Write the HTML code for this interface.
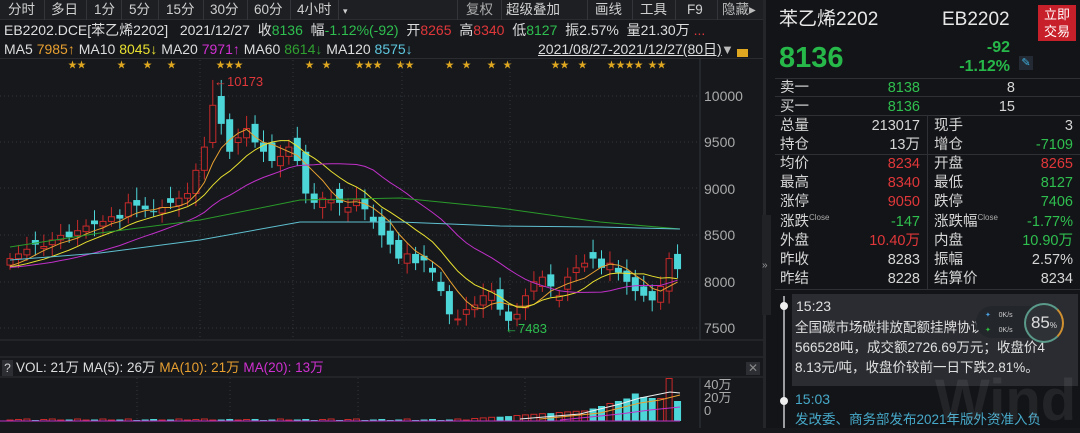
<!DOCTYPE html>
<html><head><meta charset="utf-8"><style>
*{margin:0;padding:0;box-sizing:border-box}
html,body{height:428px}
body{width:1080px;height:428px;background:#16181c;color:#d8d8d8;font-family:"Liberation Sans","Noto Sans CJK SC",sans-serif;position:relative;overflow:hidden;font-size:13px;line-height:1.2}
.a{position:absolute;white-space:nowrap}
.r{color:#e0373a}.g{color:#2fbf4f}.w{color:#e4e4e4}
.tb{position:absolute;left:0;top:0;width:763px;height:20px;background:#1d1f23;border-bottom:1px solid #2a2c30}
.tb span{position:absolute;top:2px;font-size:13.5px;line-height:16px;color:#d0d0d0}
.sep{position:absolute;top:0;width:1px;height:20px;background:#33353a}
.cl{font-size:8px;color:#aaa;position:relative;top:-6px}
</style></head><body>
<div class="tb">
<span style="left:8px">分时</span><div class="sep" style="left:44px"></div>
<span style="left:51px">多日</span><div class="sep" style="left:86px"></div>
<span style="left:94px">1分</span><div class="sep" style="left:121px"></div>
<span style="left:129px">5分</span><div class="sep" style="left:158px"></div>
<span style="left:166px">15分</span><div class="sep" style="left:203px"></div>
<span style="left:210px">30分</span><div class="sep" style="left:247px"></div>
<span style="left:254px">60分</span><div class="sep" style="left:290px"></div>
<span style="left:297px">4小时</span><div class="sep" style="left:338px"></div>
<span style="left:343px;font-size:9px;top:3px">▾</span>
<div class="sep" style="left:457px"></div>
<span style="left:466px;color:#aaa">复权</span><div class="sep" style="left:501px"></div>
<span style="left:506px">超级叠加</span><div class="sep" style="left:587px"></div>
<span style="left:595px">画线</span><div class="sep" style="left:632px"></div>
<span style="left:640px">工具</span><div class="sep" style="left:675px"></div>
<span style="left:687px">F9</span><div class="sep" style="left:717px"></div>
<span style="left:722px;color:#bbb">隐藏▸</span>
</div>
<div class="a" style="left:4px;top:22px;font-size:14px;line-height:17px;color:#ddd">EB2202.DCE[苯乙烯2202] &nbsp; 2021/12/27 &nbsp;收<span class="g">8136</span> &nbsp;幅<span class="g">-1.12%(-92)</span> &nbsp;开<span class="r">8265</span> &nbsp;高<span class="r">8340</span> &nbsp;低<span class="g">8127</span> &nbsp;振2.57% &nbsp;量21.30万 <span class="r">...</span></div>
<div class="a" style="left:4px;top:41px;font-size:14px;line-height:17px;color:#ddd">MA5 <span style="color:#e8a030">7985↑</span> MA10 <span style="color:#e8e030">8045↓</span> MA20 <span style="color:#d030d0">7971↑</span> MA60 <span style="color:#2fa02f">8614↓</span> MA120 <span style="color:#5fc8e0">8575↓</span></div>
<div class="a" style="left:538px;top:41px;font-size:14px;line-height:17px;color:#ddd;text-decoration:underline">2021/08/27-2021/12/27(80日)</div>
<div class="a" style="left:721px;top:41px;font-size:13px;line-height:17px;color:#bbb">▼</div>
<div class="a" style="left:737px;top:49px;width:11px;height:8px;background:#e0a820"></div>
<div class="a" style="left:0;top:58px;width:763px;height:1px;background:#2a2c30"></div>
<div class="a" style="left:0;top:58px;width:700px;font-size:9px;line-height:10px;color:#e0a820" id="stars"></div>
<svg class="a" style="left:0;top:0" width="765" height="428" id="ch"></svg>
<div class="a" style="left:214px;top:74px;font-size:13px;line-height:15px;color:#e0373a">←10173</div>
<div class="a" style="left:505px;top:321px;font-size:13px;line-height:15px;color:#2fbf4f">←7483</div>
<div class="a" style="left:704px;top:88px;font-size:14px;line-height:16px;color:#aaa">10000</div>
<div class="a" style="left:704px;top:134px;font-size:14px;line-height:16px;color:#aaa">9500</div>
<div class="a" style="left:704px;top:181px;font-size:14px;line-height:16px;color:#aaa">9000</div>
<div class="a" style="left:704px;top:227px;font-size:14px;line-height:16px;color:#aaa">8500</div>
<div class="a" style="left:704px;top:274px;font-size:14px;line-height:16px;color:#aaa">8000</div>
<div class="a" style="left:704px;top:320px;font-size:14px;line-height:16px;color:#aaa">7500</div>
<div class="a" style="left:2px;top:360px;width:11px;height:16px;background:#2c2e33;color:#ccc;font-size:12px;line-height:16px;text-align:center">?</div>
<div class="a" style="left:16px;top:360px;font-size:13.5px;line-height:16px;color:#ddd">VOL: 21万 MA(5): 26万 <span style="color:#e8a030">MA(10): 21万</span> <span style="color:#d030d0">MA(20): 13万</span></div>
<div class="a" style="left:746px;top:362px;width:14px;height:13px;background:#2c2e33;color:#888;font-size:12px;text-align:center;line-height:13px">✕</div>
<div class="a" style="left:704px;top:378px;font-size:13px;color:#aaa;line-height:13px">40万<br>20万<br>0</div>
<div class="a" style="left:763px;top:0;width:3px;height:428px;background:#24262a"></div>
<div class="a" style="left:766px;top:0;width:314px;height:428px;background:#131417"></div>
<div class="a" style="left:762px;top:215px;width:9px;height:100px;background:#202226;color:#999;font-size:10px;line-height:12px;padding-top:45px">»</div>
<div class="a" style="left:779px;top:9px;font-size:19px;line-height:22px;color:#e8e8e8">苯乙烯2202</div>
<div class="a" style="left:942px;top:9px;font-size:19px;line-height:22px;color:#e8e8e8">EB2202</div>
<div class="a" style="left:1038px;top:5px;width:38px;height:36px;background:#c8202a;color:#fff;font-size:13px;line-height:17px;text-align:center;padding-top:1px">立即<br>交易</div>
<div class="a" style="left:779px;top:42px;font-size:29px;line-height:32px;font-weight:bold;color:#27b84a">8136</div>
<div class="a" style="left:940px;top:38px;width:70px;text-align:right;font-size:16px;font-weight:bold;line-height:19px;color:#27b84a">-92<br>-1.12%</div>
<div class="a" style="left:1019px;top:56px;width:14px;height:14px;background:#232a33;color:#40b0e0;font-size:11px;text-align:center;line-height:14px">✎</div>
<div class="a" style="left:775px;top:78px;width:305px;height:1px;background:#2e3035"></div>
<div class="a" style="left:775px;top:96px;width:305px;height:1px;background:#2e3035"></div>
<div class="a" style="left:775px;top:115px;width:305px;height:1px;background:#2e3035"></div>
<div class="a" style="left:775px;top:154px;width:305px;height:1px;background:#2e3035"></div>
<div class="a" style="left:775px;top:289px;width:305px;height:1px;background:#2e3035"></div>
<div class="a" style="left:927px;top:116px;width:1px;height:173px;background:#2e3035"></div>
<div id="tbl"></div>
<div class="a" style="left:783px;top:296px;width:2px;height:132px;background:#9a9ca0"></div>
<div class="a" style="left:780px;top:302px;width:8px;height:8px;border-radius:50%;background:#eee"></div>
<div class="a" style="left:780px;top:397px;width:8px;height:8px;border-radius:50%;background:#eee"></div>
<div class="a" style="left:792px;top:294px;width:286px;height:92px;background:#2a2c31"></div>
<div class="a" style="left:796px;top:298px;font-size:14px;line-height:17px;color:#e0e0e0">15:23</div>
<div class="a" style="left:795px;top:318px;font-size:13.5px;color:#e0e0e0;line-height:20px;width:282px;overflow:hidden">全国碳市场碳排放配额挂牌协议交易成交量<br>566528吨，成交额2726.69万元；收盘价4<br>8.13元/吨，收盘价较前一日下跌2.81%。</div>
<div class="a" style="left:976px;top:306px;width:80px;height:32px;border-radius:16px;background:#23262b"></div>
<div class="a" style="left:985px;top:311px;font-size:7px;line-height:9px;color:#4aa0e0">✦ <span style="color:#ccc">&nbsp;&nbsp;&nbsp;0K/s</span></div>
<div class="a" style="left:985px;top:326px;font-size:7px;line-height:9px;color:#30c040">✦ <span style="color:#ccc">&nbsp;&nbsp;&nbsp;0K/s</span></div>
<div class="a" style="left:1024px;top:303px;width:40px;height:40px;border-radius:50%;background:#2e3237;border:2px solid #5a9a8a;border-right-color:#d09030;color:#ddd;font-size:17px;text-align:center;line-height:36px">85<span style="font-size:8px">%</span></div>
<div class="a" style="left:795px;top:391px;font-size:14px;line-height:17px;color:#46a8c8">15:03</div>
<div class="a" style="left:795px;top:411px;font-size:13.5px;line-height:17px;color:#46a8c8">发改委、商务部发布2021年版外资准入负</div>
<div class="a" style="left:935px;top:370px;font-size:58px;line-height:62px;font-weight:bold;color:rgba(255,255,255,0.07)">Wind</div>
<script>
const S=document.getElementById('ch');let h='';
const y=p=>96+(10000-p)*0.0929;
[96,142,188,235,282,328].forEach(v=>h+=`<line x1="0" x2="700" y1="${v}" y2="${v}" stroke="#33363b" stroke-dasharray="1,3"/>`);
[200,293,402,510].forEach(v=>h+=`<line x1="${v}" x2="${v}" y1="60" y2="340" stroke="#33363b" stroke-dasharray="1,3"/>`);
[137,230,358,525].forEach(v=>h+=`<line x1="${v}" x2="${v}" y1="378" y2="422" stroke="#33363b" stroke-dasharray="1,3"/>`);
h+=`<line x1="700" x2="700" y1="59" y2="340" stroke="#33363b"/><line x1="700" x2="700" y1="378" y2="428" stroke="#33363b"/>`;
h+=`<line x1="0" x2="763" y1="340" y2="340" stroke="#2e3035"/><line x1="0" x2="763" y1="357" y2="357" stroke="#2e3035"/><line x1="0" x2="763" y1="377" y2="377" stroke="#2e3035"/>`;
const C=[8250,8300,8350,8400,8380,8450,8500,8480,8550,8600,8620,8650,8700,8680,8850,8820,8780,8750,8800,8850,8900,8950,9200,9450,9900,9700,9400,9550,9650,9500,9400,9300,9350,9450,9300,8950,8850,8900,8880,8850,8800,8880,8780,8650,8500,8400,8250,8300,8200,8230,8100,7900,7650,7600,7700,7750,7850,7900,7700,7580,7650,7850,8000,8050,7950,7850,8050,8150,8200,8250,8150,8200,8100,8000,7900,7850,7800,7950,8250,8136];
const O=[8180,8250,8290,8450,8360,8400,8450,8540,8500,8540,8660,8600,8650,8720,8700,8880,8820,8760,8740,8900,8820,8900,8950,9200,9500,10000,9750,9500,9550,9700,9500,9500,9250,9350,9550,9400,8950,8800,8850,9000,8750,8820,8900,8700,8700,8550,8450,8200,8300,8280,8150,8000,7900,7600,7650,7700,7750,7800,7920,7680,7600,7720,7900,7950,8080,7800,7920,8100,8160,8320,8250,8130,8150,8120,8050,7950,7900,7780,7900,8300];
const X=i=>10+i*8.45;
for(let i=0;i<80;i++){const o=O[i],c=C[i],up=c>=o,x=X(i);const hi=Math.max(o,c)+60+(i*37%80),lo=Math.min(o,c)-50-(i*53%90);
let hh=(i==24||i==25)?10173:hi,ll=(i==59?7483:lo);
const col=up?'#c82a2a':'#4dd6d8';h+=`<line x1="${x}" x2="${x}" y1="${y(hh)}" y2="${y(ll)}" stroke="${col}"/>`;
const t=y(Math.max(o,c)),b=y(Math.min(o,c));
h+=up?`<rect x="${x-3}" y="${t}" width="6" height="${Math.max(1,b-t)}" fill="#16181c" stroke="${col}"/>`:`<rect x="${x-3.5}" y="${t}" width="7" height="${Math.max(1,b-t)}" fill="${col}"/>`;}
function ma(n,col){let pts=[];for(let i=0;i<80;i++){let s=0,k=0;for(let j=Math.max(0,i-n+1);j<=i;j++){s+=C[j];k++}if(k<n){s+=(n-k)*8150;k=n}pts.push(X(i)+','+y(s/k).toFixed(1))}h+=`<polyline fill="none" stroke="${col}" stroke-width="1" points="${pts.join(' ')}"/>`}
ma(5,'#e8a030');ma(10,'#e8e030');ma(20,'#c030c8');
h+=`<polyline fill="none" stroke="#2a9a2a" points="10,247 100,233 200,220 300,200 400,198 500,208 600,222 680,229"/>`;
h+=`<polyline fill="none" stroke="#5fc0d0" points="10,260 100,253 200,240 300,222 400,222 500,226 600,227 680,229"/>`;
const V=[];for(let i=0;i<80;i++){V.push(i<55?2+(i%3):i<68?5+(i-55)*1.2:i<74?20+(i-68)*5:0)}
V[74]=55;V[75]=48;V[76]=46;V[77]=45;V[78]=85;V[79]=40;
for(let i=0;i<80;i++){const x=X(i),up=C[i]>=O[i],hgt=V[i]*0.5,tp=421-hgt;const col=up?'#c82a2a':'#4dd6d8';
h+=up?`<rect x="${x-3}" y="${tp}" width="6" height="${hgt}" fill="none" stroke="${col}"/>`:`<rect x="${x-3.5}" y="${tp}" width="7" height="${hgt}" fill="${col}"/>`;}
h+=`<line x1="0" x2="680" y1="421" y2="421" stroke="#c030c8"/>`;
h+=`<polyline fill="none" stroke="#eee" points="520,419 580,414 620,404 640,398 660,394 670,392 680,393"/>`;
h+=`<polyline fill="none" stroke="#e8a030" points="540,419 600,413 640,403 660,400 680,395"/>`;
h+=`<polyline fill="none" stroke="#c030c8" points="560,420 620,414 650,410 680,407"/>`;
S.innerHTML=h;
const st=[[68,'★★'],[117,'★'],[143,'★'],[167,'★'],[216,'★★★'],[305,'★'],[322,'★'],[355,'★★★'],[396,'★★'],[445,'★'],[462,'★'],[487,'★'],[503,'★'],[551,'★★'],[578,'★'],[607,'★★★★'],[648,'★★']];
document.getElementById('stars').innerHTML=st.map(s=>`<span style="position:absolute;left:${s[0]}px;top:2px">${s[1]}</span>`).join('');
let t='';const L=(x,yy,s,c,al)=>`<div class="a ${c||''}" style="${al?'right:'+(1080-x)+'px':'left:'+x+'px'};top:${yy}px;font-size:14.5px;line-height:18px;${c?'':'color:#d6d6d6'}">${s}</div>`;
[[79,'卖一','8138','8'],[98,'买一','8136','15']].forEach(r=>{t+=L(780,r[0],r[1])+L(920,r[0],r[2],'g',1)+L(1015,r[0],r[3],'',1)});
const R=[['总量','213017','','现手','3',''],['持仓','13万','','增仓','-7109','g'],['均价','8234','r','开盘','8265','r'],['最高','8340','r','最低','8127','g'],['涨停','9050','r','跌停','7406','g'],['涨跌<span class="cl">Close</span>','-147','g','涨跌幅<span class="cl">Close</span>','-1.77%','g'],['外盘','10.40万','r','内盘','10.90万','g'],['昨收','8283','','振幅','2.57%',''],['昨结','8228','','结算价','8234','']];
R.forEach((r,i)=>{const yy=117+i*19.1;t+=L(780,yy,r[0])+L(920,yy,r[1],r[2],1)+L(934,yy,r[3])+L(1073,yy,r[4],r[5],1)});
document.getElementById('tbl').innerHTML=t;
</script>
</body></html>
